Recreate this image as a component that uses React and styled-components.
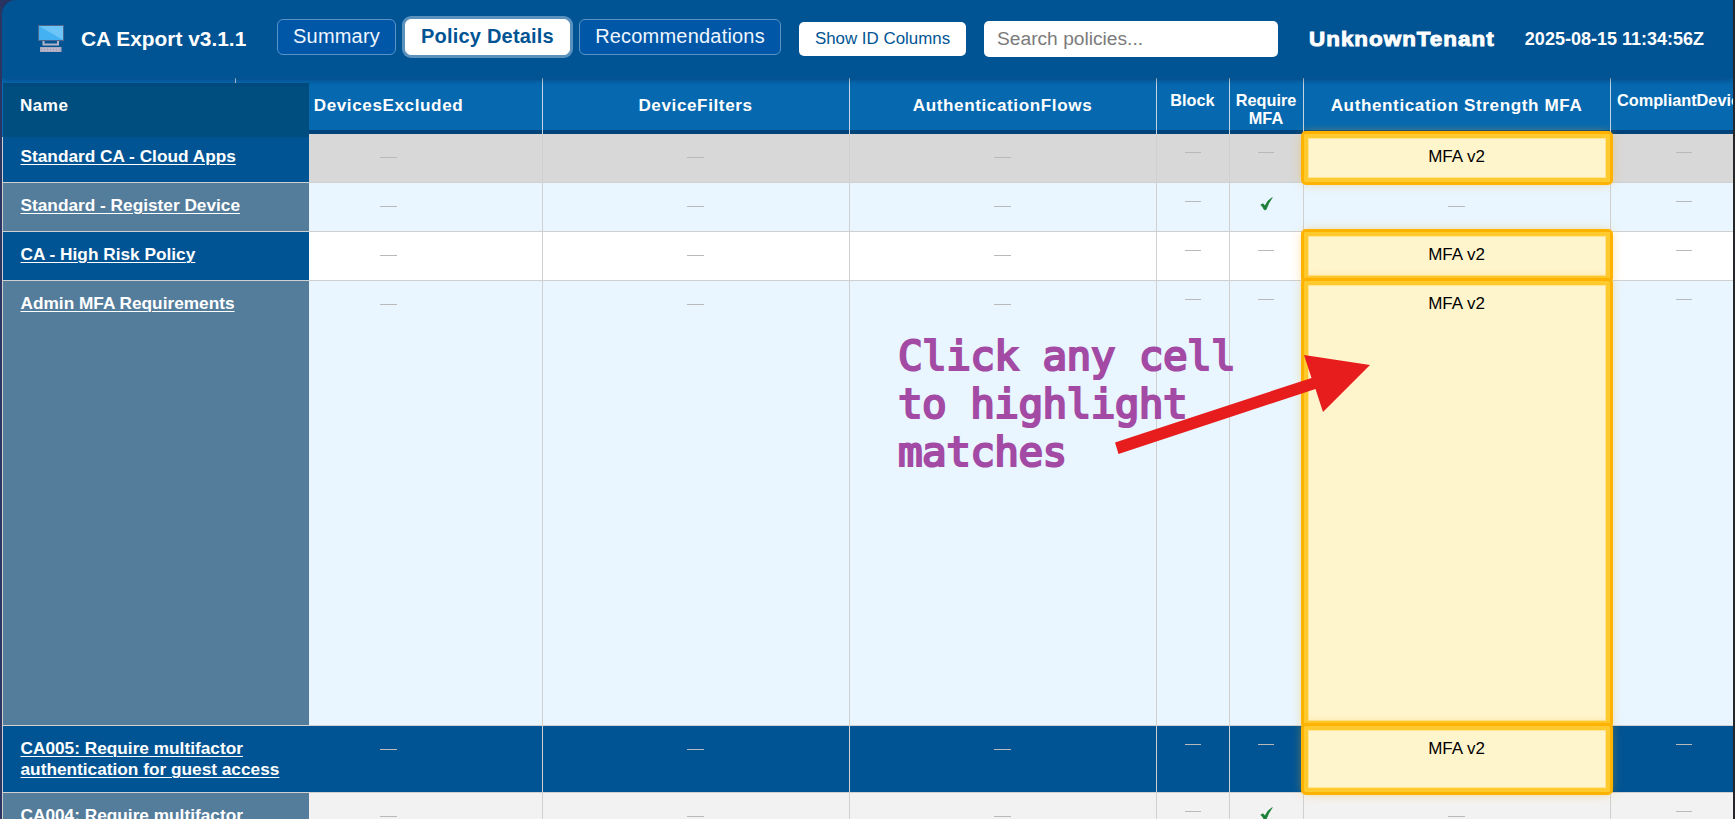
import React from 'react';
import styled, { createGlobalStyle, css } from 'styled-components';

const GlobalStyle = createGlobalStyle`
  * { box-sizing: border-box; }
  body {
    margin: 0;
    background: linear-gradient(90deg, #2b3562 0, #2b3562 50%, #25272c 50%);
    font-family: "Liberation Sans", Arial, sans-serif;
    overflow: hidden;
  }
`;

const Page = styled.div`
  position: relative;
  height: 819px;
  margin: 0 2px;
  overflow: hidden;
`;

const TopBar = styled.header`
  position: relative;
  z-index: 5;
  display: flex;
  align-items: center;
  height: 78px;
  padding: 0 29px 0 36px;
  border-top-left-radius: 14px;
  background: #005494;
  box-shadow: 0 2px 6px rgba(0, 30, 70, 0.45);
  color: #fff;
  white-space: nowrap;
`;

const Logo = styled.svg`
  width: 26px;
  height: 28px;
  margin-right: 17px;
  flex: none;
`;

const Title = styled.h1`
  width: 196px;
  margin: 0;
  font-size: 20.9px;
  line-height: 24px;
  font-weight: 700;
`;

const Tabs = styled.nav`
  display: flex;
  gap: 9px;
  margin: 0 18px 4px 0;
`;

const Tab = styled.button`
  width: ${(p) => p.$width}px;
  height: 36px;
  padding: 0 0 1px;
  border: 1px solid ${(p) => (p.$active ? '#fff' : '#5a93c6')};
  border-radius: 6px;
  background: ${(p) => (p.$active ? '#fff' : '#0057a8')};
  color: ${(p) => (p.$active ? '#005494' : '#eef6ff')};
  font: ${(p) => (p.$active ? 700 : 400)} 20px "Liberation Sans", Arial, sans-serif;
  letter-spacing: 0.2px;
  ${(p) => p.$active && css`box-shadow: 0 0 0 3px #5a91bd;`}
`;

const IdButton = styled.button`
  width: 167px;
  height: 34px;
  margin-right: 18px;
  padding: 0;
  border: 0;
  border-radius: 5px;
  background: #fff;
  color: #005494;
  font: 16.9px "Liberation Sans", Arial, sans-serif;
`;

const Search = styled.input`
  width: 294px;
  height: 36px;
  padding: 0 13px 1px;
  border: 0;
  border-radius: 5px;
  background: #fff;
  font: 19.2px "Liberation Sans", Arial, sans-serif;
  &::placeholder { color: #7b7b7b; }
`;

const Tenant = styled.strong`
  width: 185px;
  margin-left: 31px;
  font-size: 20px;
  letter-spacing: 0.9px;
  -webkit-text-stroke: 0.9px #fff;
  transform: scaleX(1.12);
  transform-origin: left;
`;

const Stamp = styled.strong`
  margin-left: auto;
  font-size: 18px;
`;

const Row = styled.div`
  display: grid;
  grid-template-columns: 307px 234px 307px 307px 73px 74px 307px 122px;
  height: ${(p) => p.$height}px;
  background: ${(p) => p.$bg};
`;

const HeadRow = styled(Row)`
  border-bottom: 4px solid #00427a;
  color: #fff;
`;

const HeadCell = styled.div`
  padding: ${(p) => (p.$small ? '13px 1px 0 0' : '18px 1px 0 0')};
  ${(p) => p.$tucked && css`padding-right: 74px;`}
  border-right: 1px solid #c4d3df;
  font-size: ${(p) => (p.$small ? 16.3 : 17.1)}px;
  line-height: ${(p) => (p.$small ? 18 : 20)}px;
  letter-spacing: ${(p) => (p.$small ? 0 : 0.6)}px;
  font-weight: 700;
  text-align: center;
  white-space: nowrap;
  &:last-child { padding-left: 6px; border-right: 0; text-align: left; }
`;

const NameHead = styled.div`
  position: relative;
  z-index: 1;
  height: 59px;
  padding: 18px 17px 0;
  border-left: 1px solid #0a6cb4;
  background: linear-gradient(#0669b0 5px, #004d7f 5px);
  font-size: 17.1px;
  line-height: 20px;
  letter-spacing: 0.5px;
  font-weight: 700;
  &::before {
    content: '';
    position: absolute;
    top: 0;
    left: 232px;
    width: 1px;
    height: 5px;
    background: #c4d3df;
  }
`;

const NameCell = styled.div`
  padding: 12px 17px 0 17.5px;
  border-left: 1px solid #d0d0d0;
  border-bottom: 1px solid #d0d0d0;
  background: ${(p) => p.$bg};
`;

const PolicyLink = styled.a`
  color: #fff;
  font-size: 17.25px;
  line-height: 21px;
  font-weight: 700;
  text-decoration: underline;
  text-decoration-thickness: 1px;
  text-underline-offset: 2px;
`;

const Cell = styled.div`
  padding-top: 11px;
  padding-right: ${(p) => (p.$tucked ? 74 : 1)}px;
  border-right: 1px solid #d0d0d0;
  border-bottom: 1px solid #d0d0d0;
  color: #000;
  font-size: 17px;
  line-height: 20px;
  text-align: center;
  &:last-child { border-right: 0; padding-left: 25px; }
`;

const Match = styled(Cell)`
  position: relative;
  z-index: 2;
  margin: 0 1px 1px 0;
  border: 0;
  padding-top: 12.5px;
  outline: 3px solid #ffb300;
  border-radius: 2px;
  background: #fff5cd;
  box-shadow: inset 0 0 0 4px #ffca2e, inset 0 0 0 5px #ffe493, 0 0 12px rgba(255, 170, 0, 0.6);
`;

const Dash = styled.span`
  display: block;
  width: ${(p) => (p.$small ? 16 : 17)}px;
  height: 1px;
  margin: ${(p) => (p.$small ? 7 : 12)}px auto 0;
  background: #b9b9b9;
`;

const Check = styled.svg`
  display: block;
  width: 13px;
  height: 14px;
  margin: 3px auto 0;
`;

const Note = styled.p`
  position: absolute;
  z-index: 3;
  left: 896px;
  top: 332px;
  margin: 0;
  color: #a34aa4;
  font: 41px/48px "DejaVu Sans Mono", monospace;
  letter-spacing: -0.6px;
  -webkit-text-stroke: 2.2px #a34aa4;
  white-space: pre;
`;

const Arrow = styled.svg`
  position: absolute;
  z-index: 4;
  left: 1108px;
  top: 348px;
  width: 270px;
  height: 112px;
`;

const BLUE = '#005494';
const SLATE = '#547c9b';

const rows = [
  { name: 'Standard CA - Cloud Apps', height: 49, bg: '#d8d8d8', side: BLUE, match: true },
  { name: 'Standard - Register Device', height: 49, bg: '#e9f6ff', side: SLATE, mfa: true },
  { name: 'CA - High Risk Policy', height: 49, bg: '#ffffff', side: BLUE, match: true },
  { name: 'Admin MFA Requirements', height: 445, bg: '#e9f6ff', side: SLATE, match: true },
  { name: 'CA005: Require multifactor authentication for guest access', height: 67, bg: BLUE, side: BLUE, match: true },
  { name: 'CA004: Require multifactor', height: 67, bg: '#f2f2f2', side: SLATE, mfa: true },
];

function CheckMark() {
  return (
    <Check viewBox="0 0 13 14">
      <path
        d="M0.8 7.8 L3.2 6.8 L5 9 Q7.500 3 12.300 0.600 Q8.500 5.500 6 12.700 L4.200 12.700 Q3 10 0.800 7.800Z"
        fill="#1a7f37"
        stroke="#1a7f37"
        strokeWidth="0.7"
      />
    </Check>
  );
}

function PolicyRow({ row }) {
  return (
    <Row $height={row.height} $bg={row.bg}>
      <NameCell $bg={row.side}>
        <PolicyLink>{row.name}</PolicyLink>
      </NameCell>
      <Cell $tucked><Dash /></Cell>
      <Cell><Dash /></Cell>
      <Cell><Dash /></Cell>
      <Cell><Dash $small /></Cell>
      <Cell>{row.mfa ? <CheckMark /> : <Dash $small />}</Cell>
      {row.match ? <Match>MFA v2</Match> : <Cell><Dash /></Cell>}
      <Cell><Dash $small /></Cell>
    </Row>
  );
}

export default function App() {
  return (
    <>
      <GlobalStyle />
      <Page>
        <TopBar>
          <Logo viewBox="0 0 26 28">
            <rect x="0" y="0" width="26" height="16" fill="#4b6690" />
            <rect x="1" y="1" width="24" height="14" fill="#43b1f2" />
            <path d="M1 1H25V15Z" fill="#6cc5f6" />
            <path d="M5.500 16V19.500H20V16" fill="none" stroke="#b5b3c8" strokeWidth="2" />
            <rect x="2" y="22" width="21.500" height="5" fill="#aaa9c0" />
            <path d="M4 23.500H22M4 25.500H22" stroke="#c9c3d3" strokeWidth="0.8" strokeDasharray="2 1" />
          </Logo>
          <Title>CA Export v3.1.1</Title>
          <Tabs>
            <Tab $width={119}>Summary</Tab>
            <Tab $width={165} $active>Policy Details</Tab>
            <Tab $width={202}>Recommendations</Tab>
          </Tabs>
          <IdButton>Show ID Columns</IdButton>
          <Search placeholder="Search policies..." />
          <Tenant>UnknownTenant</Tenant>
          <Stamp>2025-08-15 11:34:56Z</Stamp>
        </TopBar>
        <HeadRow $height={56} $bg="#0669b0">
          <NameHead>Name</NameHead>
          <HeadCell $tucked>DevicesExcluded</HeadCell>
          <HeadCell>DeviceFilters</HeadCell>
          <HeadCell>AuthenticationFlows</HeadCell>
          <HeadCell $small>Block</HeadCell>
          <HeadCell $small>Require<br />MFA</HeadCell>
          <HeadCell>Authentication Strength MFA</HeadCell>
          <HeadCell $small>CompliantDevice</HeadCell>
        </HeadRow>
        {rows.map((row) => <PolicyRow key={row.name} row={row} />)}
        <Note>{'Click any cell\nto highlight\nmatches'}</Note>
        <Arrow viewBox="1110 348 270 112">
          <path d="M1115 442.500L1311.500 378L1304 355L1370 365L1323 412L1315.500 389L1118.500 454Z" fill="#e71c1c" />
        </Arrow>
      </Page>
    </>
  );
}
